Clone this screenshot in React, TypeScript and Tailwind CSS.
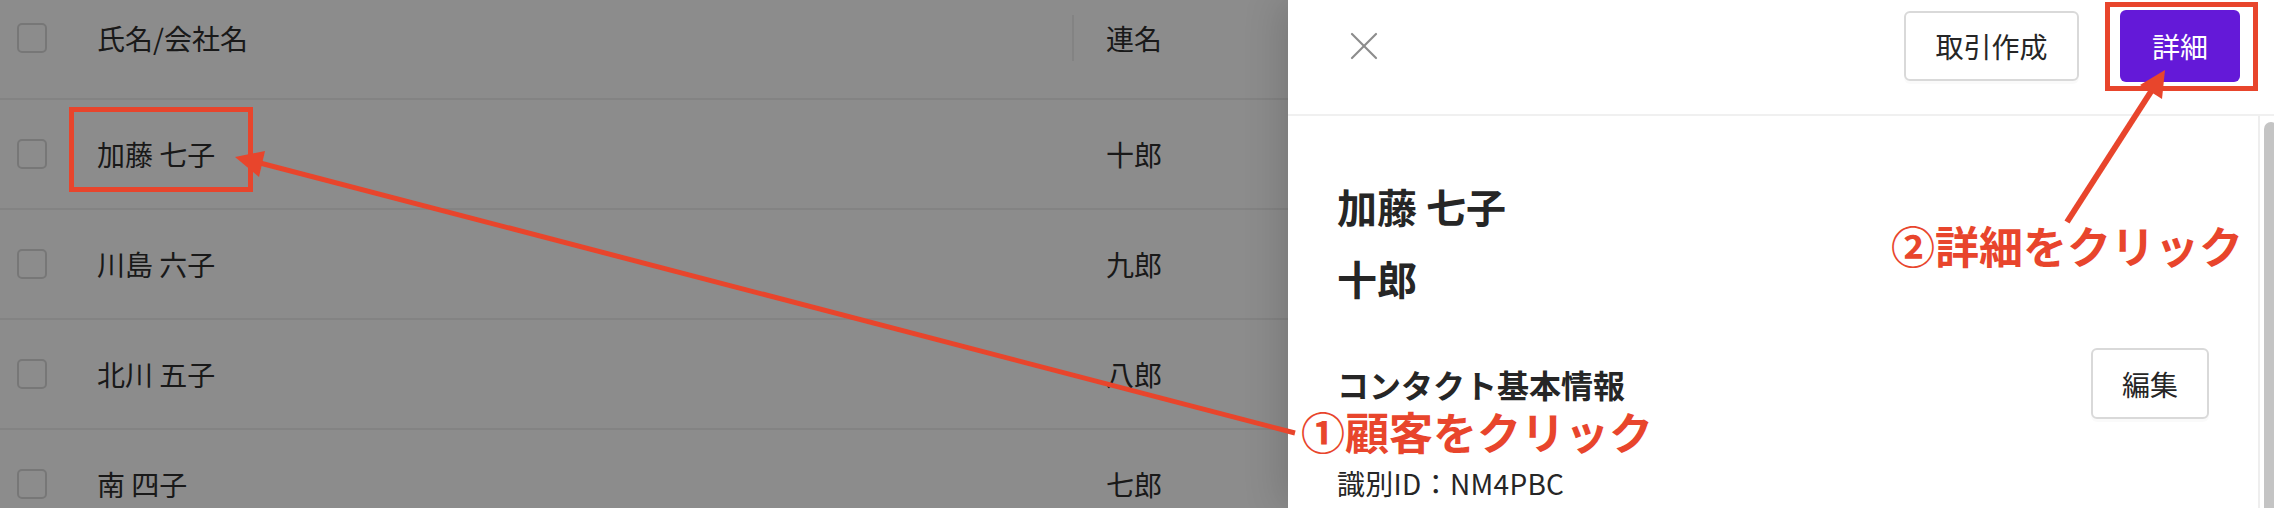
import { X } from "lucide-react";

const rows = [
  { name: "加藤 七子", sub: "十郎" },
  { name: "川島 六子", sub: "九郎" },
  { name: "北川 五子", sub: "八郎" },
  { name: "南 四子", sub: "七郎" },
];

const RED = "#e8452c";

function Checkbox() {
  return <div className="h-[30px] w-[30px] rounded-[5px] border-2 border-[#d9d9d9] bg-white" />;
}

function CustomerTable() {
  return (
    <div className="w-full text-[28px] text-[#2f2f2f]">
      {/* Header */}
      <div className="flex h-[100px] items-start border-b-2 border-[#eeeeee] pt-[15px]">
        <div className="flex h-[46px] w-[80px] items-center pl-[17px]">
          <Checkbox />
        </div>
        <div className="flex h-[46px] w-[992px] items-center pl-[17px]">氏名/会社名</div>
        <div className="h-[46px] w-[2px] bg-[#eeeeee]" />
        <div className="flex h-[46px] items-center pl-[32px]">連名</div>
      </div>

      {rows.map((row) => (
        <div key={row.name} className="flex h-[110px] items-center border-b-2 border-[#eeeeee]">
          <div className="flex w-[80px] items-center pl-[17px]">
            <Checkbox />
          </div>
          <div className="w-[992px] pl-[17px]">{row.name}</div>
          <div className="w-[2px]" />
          <div className="pl-[32px]">{row.sub}</div>
        </div>
      ))}
    </div>
  );
}

function Drawer() {
  return (
    <aside className="absolute right-0 top-0 flex h-full w-[986px] flex-col bg-white shadow-[-8px_0_36px_rgba(0,0,0,0.14)]">
      {/* Header */}
      <div className="flex h-[116px] shrink-0 items-start border-b-2 border-[#f0f0f0] pl-[52px] pr-[34px] pt-[10px]">
        <div className="flex h-[72px] w-full items-center justify-between">
          <X className="h-[48px] w-[48px] text-[#8c8c8c]" strokeWidth={1.1} />
          <div className="flex items-center gap-[41px]">
            <button className="h-[70px] w-[175px] rounded-[6px] border-2 border-[#d9d9d9] bg-white text-[28px] text-[#262626] shadow-[0_3px_0_rgba(0,0,0,0.02)]">
              取引作成
            </button>
            <button className="h-[72px] w-[120px] rounded-[6px] bg-[#6419d8] text-[28px] text-white">
              詳細
            </button>
          </div>
        </div>
      </div>

      {/* Body */}
      <div className="flex min-h-0 flex-1">
        <div className="flex-1 px-[49px] pt-[54px] text-[#262626]">
          <h2 className="text-[40px] font-bold leading-[72px]">加藤 七子</h2>
          <p className="text-[40px] font-bold leading-[72px]">十郎</p>
          <div className="mt-[34px] flex h-[71px] items-center justify-between">
            <h3 className="text-[32px] font-bold leading-[36px]">コンタクト基本情報</h3>
            <button className="h-[71px] w-[118px] rounded-[6px] border-2 border-[#d9d9d9] bg-white text-[28px] text-[#262626] shadow-[0_3px_0_rgba(0,0,0,0.02)]">
              編集
            </button>
          </div>
          <p className="mt-[50px] text-[28px] leading-[28px] tracking-[0.3px]">識別ID：NM4PBC</p>
        </div>
        {/* scrollbar */}
        <div className="w-[16px] shrink-0 border-l-2 border-[#eeeeee] pl-[4px] pt-[6px]">
          <div className="h-full w-[14px] rounded-t-full bg-[#c4c4c4]" />
        </div>
      </div>
    </aside>
  );
}

function Annotations() {
  return (
    <>
      <div className="absolute left-[69px] top-[107px] h-[85px] w-[184px] border-[5px] border-[#e8452c]" />
      <div className="absolute left-[2105px] top-[2px] h-[89px] w-[153px] border-[5px] border-[#e8452c]" />

      <svg className="pointer-events-none absolute inset-0" width={2274} height={508} viewBox="0 0 2274 508">
        <line x1={1295} y1={433} x2={260} y2={163} stroke={RED} strokeWidth={5} />
        <polygon points="235,157 265,151 259,177" fill={RED} />
        <line x1={2067} y1={222} x2={2152} y2={90} stroke={RED} strokeWidth={6} />
        <polygon points="2165,70 2162,99 2140,85" fill={RED} />
      </svg>

      <div className="absolute left-[1301px] top-[411px] whitespace-nowrap text-[44px] font-bold leading-[40px] text-[#e8452c]">
        ①顧客をクリック
      </div>
      <div className="absolute left-[1891px] top-[225px] whitespace-nowrap text-[44px] font-bold leading-[40px] text-[#e8452c]">
        ②詳細をクリック
      </div>
    </>
  );
}

export default function App() {
  return (
    <div
      className="relative h-[508px] w-[2274px] overflow-hidden bg-white"
      style={{ fontFamily: '"Noto Sans CJK JP", "Noto Sans", sans-serif' }}
    >
      <CustomerTable />
      <div className="absolute inset-0 bg-black/45" />
      <Drawer />
      <Annotations />
    </div>
  );
}
